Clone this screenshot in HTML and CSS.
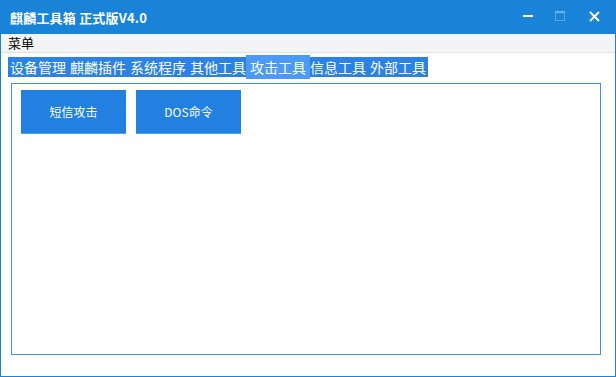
FILE: index.html
```html
<!DOCTYPE html>
<html lang="zh">

<head>
  <meta charset="UTF-8" />
  <title>麒麟工具箱 正式版V4.0</title>
  <link rel="stylesheet" href="styles.css">
</head>

<body>
  <div class="window">
    <div class="titlebar">
      <span class="title">麒麟工具箱 正式版V4.0</span>
      <div class="controls">
        <span class="ctl ctl-min">
          <svg width="10" height="10" viewBox="0 0 10 10"><rect x="0" y="4" width="10" height="2" fill="#fff" /></svg>
        </span>
        <span class="ctl ctl-max">
          <svg width="10" height="10" viewBox="0 0 10 10">
            <rect x="0.5" y="0.5" width="9" height="9" fill="none" stroke="#fff" stroke-opacity="0.3" />
            <rect x="0.5" y="0.5" width="9" height="2" fill="#fff" fill-opacity="0.3" />
          </svg>
        </span>
        <span class="ctl ctl-close">
          <svg width="11" height="11" viewBox="0 0 11 11">
            <path d="M1 1 L10 10 M10 1 L1 10" stroke="#fff" stroke-width="2" />
          </svg>
        </span>
      </div>
    </div>

    <div class="frame">
      <div class="menubar">
        <span class="menu-item">菜单</span>
      </div>

      <div class="tabs">
        <span class="tab">设备管理</span>
        <span class="tab">麒麟插件</span>
        <span class="tab">系统程序</span>
        <span class="tab">其他工具</span>
        <span class="tab active">攻击工具</span>
        <span class="tab">信息工具</span>
        <span class="tab">外部工具</span>
      </div>

      <div class="panel">
        <button class="btn">短信攻击</button>
        <button class="btn">DOS命令</button>
      </div>
    </div>
  </div>
</body>

</html>
```

FILE: styles.css
```css
* {
  box-sizing: border-box;
}

body {
  margin: 0;
  background-color: #fff;
  font-family: "Noto Sans CJK SC", "Microsoft YaHei", sans-serif;
}

.window {
  width: 616px;
  height: 377px;
  display: flex;
  flex-direction: column;
}

/* заголовок окна */
.titlebar {
  height: 34px;
  background-color: #1883d7;
  display: flex;
  align-items: center;
  color: #fff;
}

.title {
  padding-left: 10px;
  font-size: 13px;
  font-weight: bold;
  letter-spacing: 0.2px;
}

.controls {
  margin-left: auto;
  display: flex;
  height: 100%;
}

.ctl {
  display: flex;
  align-items: center;
  justify-content: center;
  height: 100%;
  padding-bottom: 2px;
}

.ctl-min {
  width: 32px;
}

.ctl-max {
  width: 31px;
}

.ctl-close {
  width: 41px;
  padding-right: 2px;
}

.frame {
  flex: 1;
  border: 1px solid #1883d7;
  border-top: none;
  display: flex;
  flex-direction: column;
  align-items: flex-start;
}

.menubar {
  width: 100%;
  height: 19px;
  background-color: #f3f4f6;
  border-bottom: 1px solid #e3e3e3;
  padding-left: 7px;
  font-size: 13px;
  line-height: 18px;
  color: #000;
}

.tabs {
  margin-top: 4px;
  margin-left: 7px;
  display: flex;
  height: 20px;
  background-color: #2a82e4;
}

.tab {
  width: 60px;
  padding-left: 2px;
  font-size: 14px;
  line-height: 20px;
  color: #fff;
  white-space: nowrap;
}

.tab.active {
  width: 64px;
  margin: -2px -2px;
  height: 24px;
  line-height: 24px;
  padding-left: 4px;
  background-color: #4b9bf6;
}

.panel {
  align-self: stretch;
  margin: 6px 14px 21px 10px;
  flex: 1;
  border: 1px solid #3d8eef;
  padding: 6px 9px;
  display: flex;
  align-items: flex-start;
  gap: 10px;
}

.btn {
  width: 105px;
  height: 44px;
  border: none;
  border-bottom: 1px solid #4e9ef3;
  background-color: #2180e0;
  color: #fff;
  font-family: "Noto Sans CJK SC", "Microsoft YaHei", sans-serif;
  font-size: 12px;
  padding: 0;
  cursor: pointer;
}
```
